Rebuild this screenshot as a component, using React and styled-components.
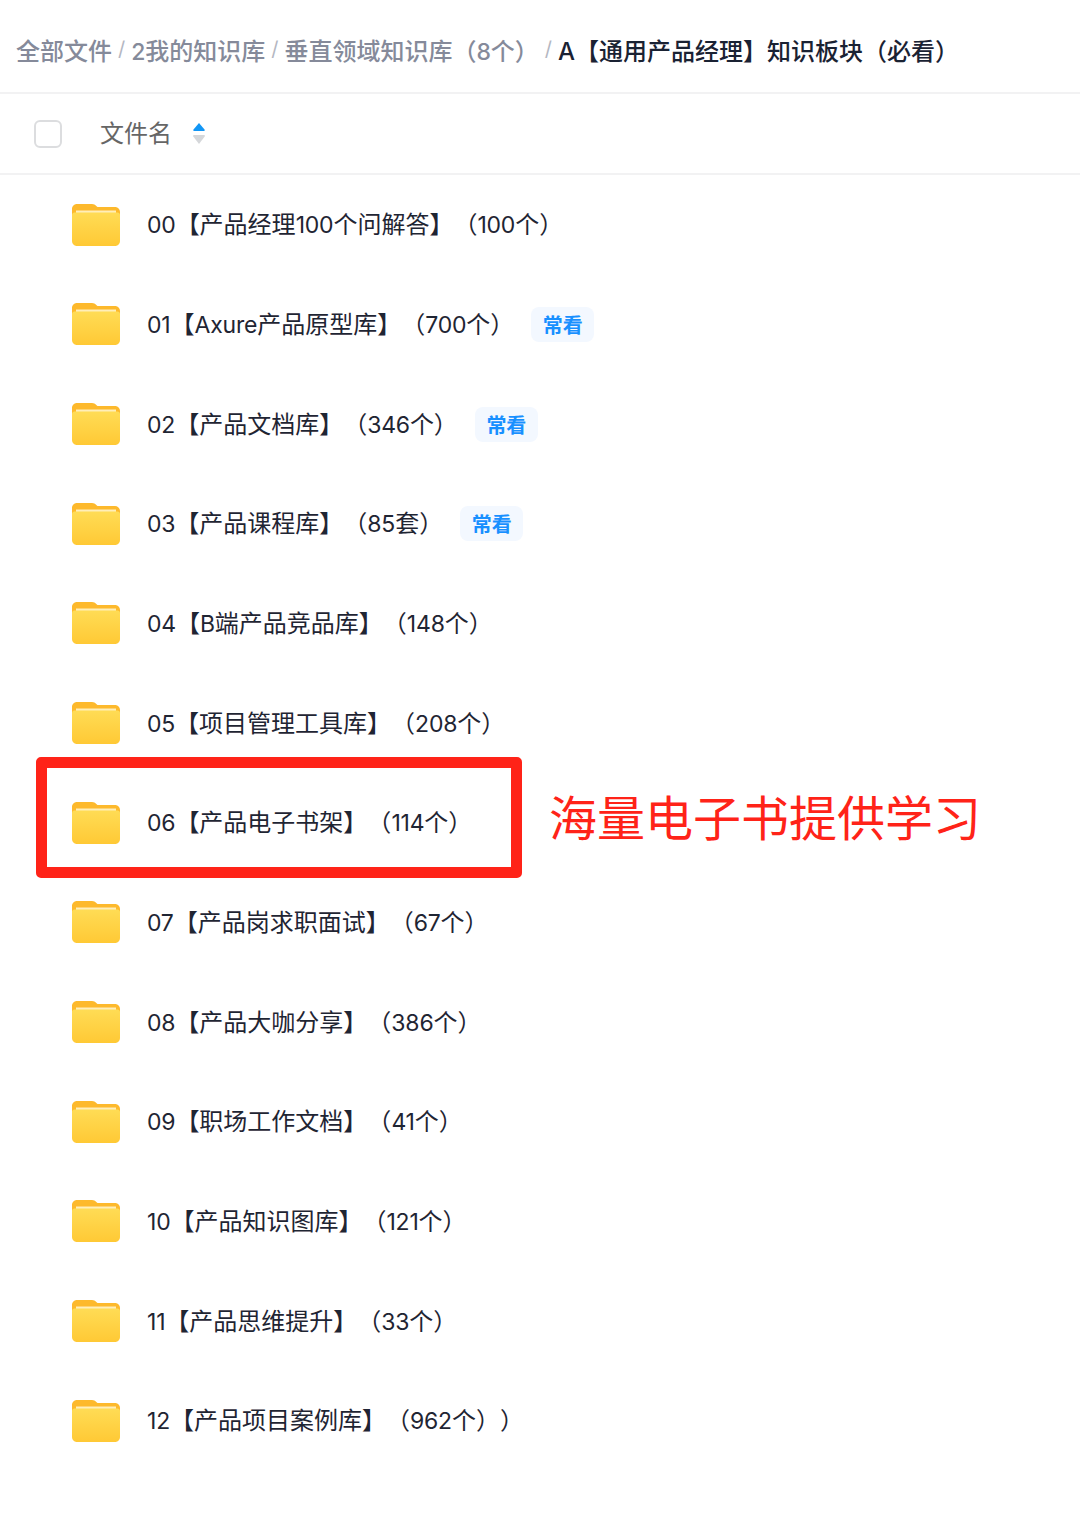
import React from 'react'
import styled, { createGlobalStyle } from 'styled-components'

const GlobalStyle = createGlobalStyle`
  html, body { margin: 0; padding: 0; background: #fff; }
  body {
    font-family: Inter, "Noto Sans CJK SC", sans-serif;
    text-spacing-trim: space-all;
  }
`

const folders = [
  { name: '00【产品经理100个问解答】（100个）' },
  { name: '01【Axure产品原型库】（700个）', tag: true },
  { name: '02【产品文档库】（346个）', tag: true },
  { name: '03【产品课程库】（85套）', tag: true },
  { name: '04【B端产品竞品库】（148个）' },
  { name: '05【项目管理工具库】（208个）' },
  { name: '06【产品电子书架】（114个）' },
  { name: '07【产品岗求职面试】（67个）' },
  { name: '08【产品大咖分享】（386个）' },
  { name: '09【职场工作文档】（41个）' },
  { name: '10【产品知识图库】（121个）' },
  { name: '11【产品思维提升】（33个）' },
  { name: '12【产品项目案例库】（962个））' },
]

// latin runs sit a little narrower than the body font in the original
const withLatin = (text) =>
  text.split(/([0-9A-Za-z]+)/).map((part, i) => (i % 2 ? <Latin key={i}>{part}</Latin> : part))

function FolderIcon() {
  return (
    <svg width="48" height="42" viewBox="0 0 48 42">
      <defs>
        <linearGradient id="folderFront" x1="0" y1="0" x2="0" y2="1">
          <stop offset="0" stopColor="#ffdc55" />
          <stop offset="1" stopColor="#ffc935" />
        </linearGradient>
      </defs>
      <path d="M5 0h15c2 0 3 .8 4 1.800L25.500 3H43c2.800 0 5 2.200 5 5v8H0V5c0-2.800 2.200-5 5-5z" fill="#fdb92c" />
      <path d="M4 6.500h40v6H4z" fill="#ffeeb8" />
      <path d="M0 11c0-1.400 1.100-2.500 2.500-2.500h43c1.400 0 2.500 1.100 2.500 2.500v26c0 2.800-2.200 5-5 5H5c-2.800 0-5-2.200-5-5z" fill="url(#folderFront)" />
    </svg>
  )
}

function SortIcon() {
  return (
    <svg width="12" height="24" viewBox="0 0 12 24">
      <path d="M6 1 11.500 7.500c.6.800.2 1.500-.8 1.500H1.300c-1 0-1.400-.7-.8-1.500z" fill="#1296f5" />
      <path d="M1 13h10c.8 0 1.200.8.700 1.500L6 22 .3 14.500c-.5-.7-.1-1.500.7-1.500z" fill="#d5d7da" />
    </svg>
  )
}

export default function App() {
  return (
    <Page>
      <GlobalStyle />
      <Breadcrumb>
        <Crumb>全部文件</Crumb>
        <Slash>/</Slash>
        <Crumb>{withLatin('2我的知识库')}</Crumb>
        <Slash>/</Slash>
        <Crumb>{withLatin('垂直领域知识库（8个）')}</Crumb>
        <Slash>/</Slash>
        <Crumb current>A【通用产品经理】知识板块（必看）</Crumb>
      </Breadcrumb>
      <TableHead>
        <Checkbox />
        <HeadLabel>文件名</HeadLabel>
        <SortIcon />
      </TableHead>
      <List>
        {folders.map((item) => (
          <Row key={item.name}>
            <FolderIcon />
            <RowName>{withLatin(item.name)}</RowName>
            {item.tag && <Tag>常看</Tag>}
          </Row>
        ))}
      </List>
      <Highlight />
      <Note>海量电子书提供学习</Note>
    </Page>
  )
}

const Page = styled.div`
  position: relative;
  width: 1080px;
  height: 1540px;
  overflow: hidden;
  background: #fff;
`

const Latin = styled.span`
  font-size: 23px;
  letter-spacing: -0.2px;
`

const Breadcrumb = styled.div`
  display: flex;
  align-items: center;
  height: 86px;
  padding: 6px 0 0 16px;
  border-bottom: 2px solid #f2f2f3;
  font-size: 24px;
  white-space: nowrap;
`

const Crumb = styled.span`
  color: ${(props) => (props.current ? '#1a2233' : '#858a9a')};
  font-weight: 500;
`

const Slash = styled.span`
  margin: 0 6px;
  color: #b4b7c2;
  font-size: 20px;
`

const TableHead = styled.div`
  display: flex;
  align-items: center;
  height: 79px;
  padding-left: 34px;
  border-bottom: 2px solid #f2f2f3;
`

const Checkbox = styled.div`
  box-sizing: border-box;
  width: 28px;
  height: 28px;
  border: 2px solid #dcdddf;
  border-radius: 6px;
`

const HeadLabel = styled.span`
  margin: 0 21px 4px 38px;
  color: #666;
  font-size: 24px;
`

const List = styled.div`
  display: flex;
  flex-direction: column;
`

const Row = styled.div`
  display: flex;
  align-items: center;
  height: 99.67px;
  padding-left: 72px;
`

const RowName = styled.span`
  margin: 0 0 4px 27px;
  color: #1f2533;
  font-size: 24px;
  white-space: nowrap;
`

const Tag = styled.span`
  display: flex;
  align-items: center;
  justify-content: center;
  width: 63px;
  height: 35px;
  margin-left: 17px;
  border-radius: 8px;
  background: #f3f8ff;
  color: #1890ff;
  font-size: 20px;
  font-weight: 700;
`

const Highlight = styled.div`
  position: absolute;
  left: 36px;
  top: 757px;
  box-sizing: border-box;
  width: 486px;
  height: 121px;
  border: 11px solid #ff2318;
  border-radius: 5px;
`

const Note = styled.div`
  position: absolute;
  left: 549px;
  top: 784px;
  color: #ff2318;
  font-size: 48px;
  line-height: 70px;
  white-space: nowrap;
`
